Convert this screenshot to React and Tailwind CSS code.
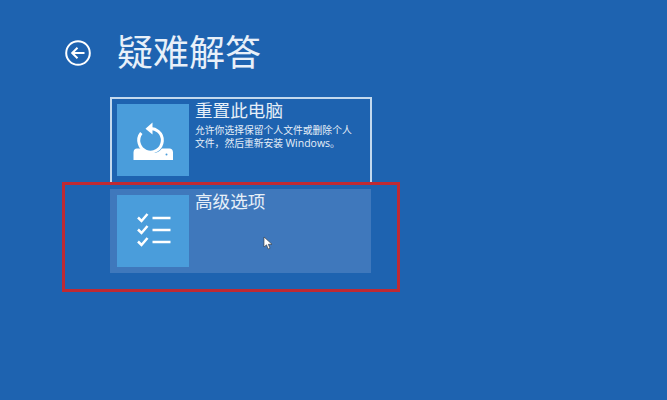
export default function App() {
  const cjk = { fontFamily: '"Noto Sans CJK SC", "Liberation Sans", sans-serif' };
  return (
    <div style={cjk} className="relative w-[667px] h-[400px] overflow-hidden bg-[#1e63b0] text-white">
      <div className="flex items-center h-[44px] pt-[31px] box-content pl-[65px]">
        <svg width="26" height="26" viewBox="0 0 26 26" fill="none" stroke="white" strokeWidth="2">
          <circle cx="13" cy="13" r="11.8" />
          <path d="M19.5 13H7.5M12.5 7.8L7.2 13l5.3 5.2" />
        </svg>
        <h1 className="ml-[26px] -mt-[6px] text-[36px] leading-[44px] font-normal text-[#e8f0f9]">疑难解答</h1>
      </div>
      <div className="ml-[110px] mt-[22px] w-[262px] flex flex-col gap-[5px]">
        <div className="flex h-[87px] border-2 border-b-0 border-[#c3d9ee] pl-[5px] pt-[5px]">
          <div className="w-[72px] h-[72px] shrink-0 bg-[#4a9ddb] flex items-center justify-center">
            <svg width="46" height="46" viewBox="0 0 46 46" fill="none" className="mt-[3px]">
              <path d="M3.500 33.500C3.500 31 5 29.500 7 29.500h7.200c2 3 5.300 4.500 8.800 4.500s6.800-1.500 8.800-4.500H39.500c2 0 3.500 1.500 3.500 4V41H3.500z" fill="white" />
              <circle cx="36.500" cy="35.500" r="1" fill="#4a9ddb" />
              <path d="M18 9.800A11.800 11.800 0 1 1 11.300 14" stroke="white" strokeWidth="3" />
              <path d="M22.500 3.500L15.500 9.800l7 5.700z" fill="white" />
            </svg>
          </div>
          <div className="ml-[6px] -mt-[5px]">
            <div className="text-[17.6px] leading-[22px] text-[#e6eff8]">重置此电脑</div>
            <div className="mt-[3px] text-[9.8px] leading-[13px] text-[#e6eff8] w-[165px]">
              允许你选择保留个人文件或删除个人文件，然后重新安装 <span className="font-['Open_Sans'] text-[10.5px]">Windows</span>。
            </div>
          </div>
        </div>
        <div className="flex h-[84px] w-[261px] bg-[#3f78bc] pl-[7px] pt-[6px]">
          <div className="w-[72px] h-[72px] shrink-0 bg-[#4a9ddb] flex items-center justify-center">
            <svg width="36" height="36" viewBox="0 0 36 36" fill="none" stroke="white" strokeWidth="2.500" className="ml-[1px] mt-[-2px]">
              <path d="M2 5.500L5.500 9 11.500 2M2 17.500L5.500 21 11.500 14M2 29.500L5.500 33 11.500 26" />
              <path d="M16.500 6h18M16.500 18h18M16.500 30h18" />
            </svg>
          </div>
          <div className="ml-[6px] -mt-[5px] text-[17.6px] leading-[22px] text-[#e6eff8]">高级选项</div>
        </div>
      </div>
      <div className="absolute left-[62px] top-[182px] w-[338px] h-[110px] border-[3px] border-[#bf2a33]" />
      <svg className="absolute left-[263px] top-[236px]" width="10" height="14" viewBox="0 0 10 14">
        <path d="M1 1v10l2.500-2.200L5.200 13l1.800-.8L5.300 8.300H9z" fill="white" stroke="#333" strokeWidth="0.600" />
      </svg>
    </div>
  );
}
